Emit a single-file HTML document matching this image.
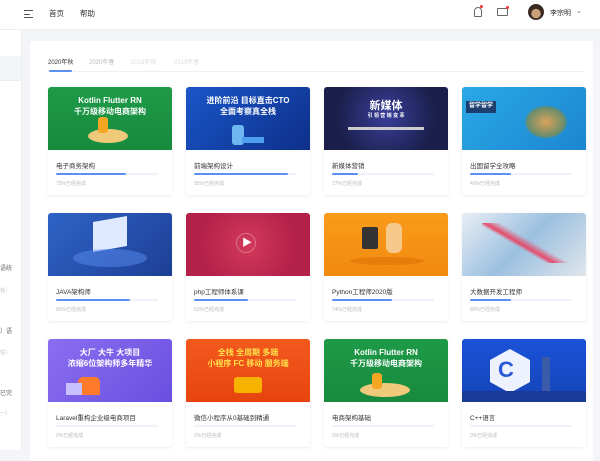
<!DOCTYPE html>
<html><head><meta charset="utf-8">
<style>
*{margin:0;padding:0;box-sizing:border-box}
body{width:600px;height:450px;overflow:hidden;background:#f4f5f9;font-family:"Liberation Sans","Noto Sans CJK SC",sans-serif;position:relative;color:#333}
.hdr{position:absolute;left:0;top:0;width:600px;height:30px;background:#fff;border-bottom:1px solid #eceef2}
.side{position:absolute;left:0;top:30px;width:22px;height:420px;background:#fff;border-right:1px solid #eceef2;overflow:hidden}
.panel{position:absolute;left:30px;top:41px;width:563px;height:420px;background:#fff;border-radius:3px}
.tab{position:absolute;top:57px;font-size:6px;color:#bbb}
.card{position:absolute;width:124px;height:108px;background:#fff;border-radius:3px;box-shadow:0 1px 3px rgba(0,0,0,.08);overflow:hidden}
.img{height:63px;position:relative;color:#fff;text-align:center;font-weight:bold;font-size:8px;line-height:11px;padding-top:8px}
.t{position:absolute;left:8px;top:73px;font-size:6.5px;color:#333}
.track{position:absolute;left:8px;top:86px;width:102px;height:2px;background:#eef2fb;border-radius:1px}
.bar{height:2px;background:#5b8ff0;border-radius:1px}
.p{position:absolute;left:8px;top:93px;font-size:5px;color:#bbb}
.st{position:absolute;left:0;font-size:6px;color:#666}
</style></head><body>
<div class="hdr">
 <div style="position:absolute;left:24px;top:10px;width:9px;height:8px;border-top:1px solid #555;border-bottom:1px solid #555"><div style="margin-top:2.5px;height:1px;width:6px;background:#555"></div></div>
 <div style="position:absolute;left:49px;top:8px;font-size:7.5px;color:#333">首页</div>
 <div style="position:absolute;left:80px;top:8px;font-size:7.5px;color:#333">帮助</div>
 <div style="position:absolute;left:474px;top:7px;width:8px;height:10px;border:1px solid #666;border-radius:4px 4px 1px 1px"></div>
 <div style="position:absolute;left:480px;top:5px;width:3px;height:3px;background:#f33;border-radius:50%"></div>
 <div style="position:absolute;left:497px;top:8px;width:11px;height:8px;border:1px solid #666;border-radius:1px"></div>
 <div style="position:absolute;left:506px;top:6px;width:3px;height:3px;background:#f33;border-radius:50%"></div>
 <div style="position:absolute;left:528px;top:4px;width:16px;height:16px;border-radius:50%;background:radial-gradient(circle at 50% 60%,#c9a07a 0 35%,#3a2a20 40%)"></div>
 <div style="position:absolute;left:550px;top:8px;font-size:7px;color:#333">李宗明</div>
 <div style="position:absolute;left:576px;top:7px;font-size:7px;color:#666">⌄</div>
</div>
<div class="side">
 <div style="position:absolute;top:26px;left:0;width:22px;height:24px;background:#f4f5f9"></div>
 <div style="position:absolute;top:50px;left:0;width:22px;height:1px;background:#eee"></div>
 <div class="st" style="top:233px">语统</div>
 <div class="st" style="top:257px;color:#bbb;font-size:5px">任）</div>
 <div class="st" style="top:296px">）语</div>
 <div class="st" style="top:319px;color:#bbb;font-size:5px">任）</div>
 <div class="st" style="top:358px">已完</div>
 <div class="st" style="top:380px;color:#bbb;font-size:5px">一）</div>
</div>
<div class="panel"></div>
<div class="tab" style="left:48px;color:#333">2020年秋</div>
<div class="tab" style="left:89px">2020年春</div>
<div class="tab" style="left:131px;color:#ddd">2019年秋</div>
<div class="tab" style="left:174px;color:#ddd">2019年春</div>
<div style="position:absolute;left:48px;top:71px;width:537px;height:1px;background:#eef0f5"></div>
<div style="position:absolute;left:49px;top:70px;width:23px;height:2px;background:#5b8ff0;border-radius:1px"></div>

<!-- row1 -->
<div class="card" style="left:48px;top:87px"><div class="img" style="background:linear-gradient(#1e9a47,#178a3e)">Kotlin Flutter RN<br>千万级移动电商架构<div style="position:absolute;left:40px;top:42px;width:40px;height:14px;background:#f0c97a;border-radius:50%"></div><div style="position:absolute;left:50px;top:30px;width:10px;height:16px;background:#f5a623;border-radius:3px"></div></div>
<div class="t">电子商务架构</div><div class="track"><div class="bar" style="width:70px"></div></div><div class="p">75%已经完成</div></div>
<div class="card" style="left:186px;top:87px"><div class="img" style="background:linear-gradient(135deg,#1a56c8,#0d2f8a)">进阶前沿 目标直击CTO<br>全面考察真全栈<div style="position:absolute;left:46px;top:38px;width:12px;height:20px;background:#6fb7f0;border-radius:3px"></div><div style="position:absolute;left:56px;top:50px;width:22px;height:6px;background:#4da0f0"></div></div>
<div class="t">前端架构设计</div><div class="track"><div class="bar" style="width:94px"></div></div><div class="p">95%已经完成</div></div>
<div class="card" style="left:324px;top:87px"><div class="img" style="background:radial-gradient(circle at 50% 45%,#3a3f9a,#1a1f4a 70%);font-size:11px;padding-top:14px">新媒体<div style="font-size:5px;line-height:8px">引 领 营 销 变 革</div><div style="position:absolute;left:24px;top:40px;width:76px;height:3px;background:#ccc"></div></div>
<div class="t">新媒体营销</div><div class="track"><div class="bar" style="width:26px"></div></div><div class="p">37%已经完成</div></div>
<div class="card" style="left:462px;top:87px"><div class="img" style="background:linear-gradient(135deg,#2aa8e6,#1c86d0)"><div style="position:absolute;left:4px;top:14px;width:30px;height:12px;background:#1d3f70;font-size:6px">留学留学</div><div style="position:absolute;left:62px;top:18px;width:44px;height:34px;background:radial-gradient(#d9a25a,#6a8d6a 60%,transparent 70%)"></div></div>
<div class="t">出国留学全攻略</div><div class="track"><div class="bar" style="width:41px"></div></div><div class="p">40%已经完成</div></div>

<!-- row2 -->
<div class="card" style="left:48px;top:213px"><div class="img" style="background:linear-gradient(135deg,#2f63c7,#1d3f95)"><div style="position:absolute;left:45px;top:6px;width:34px;height:30px;background:#dfe9ff;transform:skewY(-10deg)"></div><div style="position:absolute;left:25px;top:36px;width:74px;height:18px;background:rgba(90,140,240,.5);border-radius:50%"></div></div>
<div class="t">JAVA架构师</div><div class="track"><div class="bar" style="width:74px"></div></div><div class="p">80%已经完成</div></div>
<div class="card" style="left:186px;top:213px"><div class="img" style="background:radial-gradient(circle at 50% 50%,#d33a5a,#b3204a 70%)"><div style="position:absolute;left:50px;top:20px;width:20px;height:20px;border-radius:50%;border:1px solid rgba(255,255,255,.3)"></div><div style="position:absolute;left:56px;top:25px;font-size:10px">▶</div></div>
<div class="t">php工程师体系课</div><div class="track"><div class="bar" style="width:54px"></div></div><div class="p">62%已经完成</div></div>
<div class="card" style="left:324px;top:213px"><div class="img" style="background:linear-gradient(#fb9b1a,#f08a10)"><div style="position:absolute;left:38px;top:14px;width:16px;height:22px;background:#333;border-radius:2px"></div><div style="position:absolute;left:62px;top:10px;width:16px;height:30px;background:#f6c88a;border-radius:6px"></div><div style="position:absolute;left:26px;top:44px;width:74px;height:8px;background:#e67c0a;border-radius:50%"></div></div>
<div class="t">Python工程师2020版</div><div class="track"><div class="bar" style="width:60px"></div></div><div class="p">74%已经完成</div></div>
<div class="card" style="left:462px;top:213px"><div class="img" style="background:linear-gradient(135deg,#e8eef5,#9cc0e0 50%,#e0e6ec)"><div style="position:absolute;left:20px;top:10px;width:90px;height:40px;background:linear-gradient(30deg,transparent 40%,#e64a6a 45%,transparent 55%)"></div></div>
<div class="t">大数据开发工程师</div><div class="track"><div class="bar" style="width:41px"></div></div><div class="p">80%已经完成</div></div>

<!-- row3 -->
<div class="card" style="left:48px;top:339px"><div class="img" style="background:linear-gradient(135deg,#8a6ef0,#6a4fe0)">大厂 大牛 大项目<br>浓缩6位架构师多年精华<div style="position:absolute;left:30px;top:38px;width:22px;height:18px;background:#ff7a2a;border-radius:5px 5px 0 0"></div><div style="position:absolute;left:18px;top:44px;width:16px;height:12px;background:#c8c0ff"></div></div>
<div class="t">Laravel重构企业级电商项目</div><div class="track"></div><div class="p">0%已经完成</div></div>
<div class="card" style="left:186px;top:339px"><div class="img" style="background:linear-gradient(#f25a1e,#e8430f);color:#ffe14a">全栈 全周期 多端<br>小程序 FC 移动 服务端<div style="position:absolute;left:48px;top:38px;width:28px;height:16px;background:#f5b300;border-radius:3px"></div></div>
<div class="t">微信小程序从0基础到精通</div><div class="track"></div><div class="p">0%已经完成</div></div>
<div class="card" style="left:324px;top:339px"><div class="img" style="background:linear-gradient(#1e9a47,#178a3e)">Kotlin Flutter RN<br>千万级移动电商架构<div style="position:absolute;left:36px;top:44px;width:50px;height:14px;background:#f0c97a;border-radius:50%"></div><div style="position:absolute;left:48px;top:34px;width:10px;height:16px;background:#f5a623;border-radius:3px"></div></div>
<div class="t">电商架构基础</div><div class="track"></div><div class="p">0%已经完成</div></div>
<div class="card" style="left:462px;top:339px"><div class="img" style="background:linear-gradient(#1a52d8,#1444b8)"><div style="position:absolute;left:28px;top:10px;width:40px;height:44px;background:#eef2ff;clip-path:polygon(50% 0,100% 25%,100% 75%,50% 100%,0 75%,0 25%)"></div><div style="position:absolute;left:36px;top:18px;font-size:22px;color:#2a5ad8;line-height:26px">C</div><div style="position:absolute;left:80px;top:18px;width:8px;height:34px;background:#3b5aa8"></div><div style="position:absolute;left:0;top:52px;width:124px;height:11px;background:#1a3a9a"></div></div>
<div class="t">C++语言</div><div class="track"></div><div class="p">0%已经完成</div></div>
</body></html>
